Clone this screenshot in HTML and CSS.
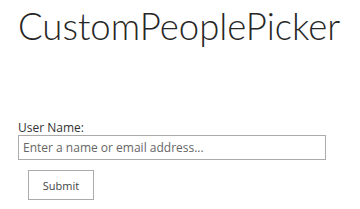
FILE: index.html
```html
<!DOCTYPE html>
<html>
<head>
<meta charset="utf-8">
<link rel="stylesheet" href="styles.css">
</head>
<body>
<div class="page">
  <h1 class="title">CustomPeoplePicker</h1>
  <div class="form">
    <label class="label" for="user">User Name:</label>
    <input class="input" id="user" type="text" placeholder="Enter a name or email address...">
    <button class="submit" type="button">Submit</button>
  </div>
</div>
</body>
</html>
```
FILE: styles.css
```css
html, body {
  margin: 0;
  padding: 0;
  background: #ffffff;
}
.page {
  padding: 6px 0 0 18px;
  font-family: "Open Sans", "Noto Sans", sans-serif;
  color: #333333;
}
.title {
  margin: 0;
  font-family: "Lato", "Open Sans", sans-serif;
  font-weight: 300;
  font-size: 36.5px;
  line-height: 40px;
  color: #262626;
  letter-spacing: 0;
}
.form {
  display: flex;
  flex-direction: column;
  align-items: flex-start;
  margin-top: 74px;
}
.label {
  font-size: 12px;
  line-height: 15px;
  color: #333333;
}
.input {
  box-sizing: border-box;
  width: 308px;
  height: 25px;
  margin: 0;
  padding: 0 4px;
  border: 1px solid #ababab;
  font-family: "Open Sans", sans-serif;
  font-size: 12px;
  color: #444444;
  outline: none;
}
.input::placeholder {
  color: #666666;
  opacity: 1;
}
.submit {
  box-sizing: border-box;
  width: 66px;
  height: 30px;
  margin: 10px 0 0 10px;
  padding: 0;
  border: 1px solid #ababab;
  background: #ffffff;
  font-family: "Open Sans", sans-serif;
  font-size: 11px;
  color: #444444;
}
```
